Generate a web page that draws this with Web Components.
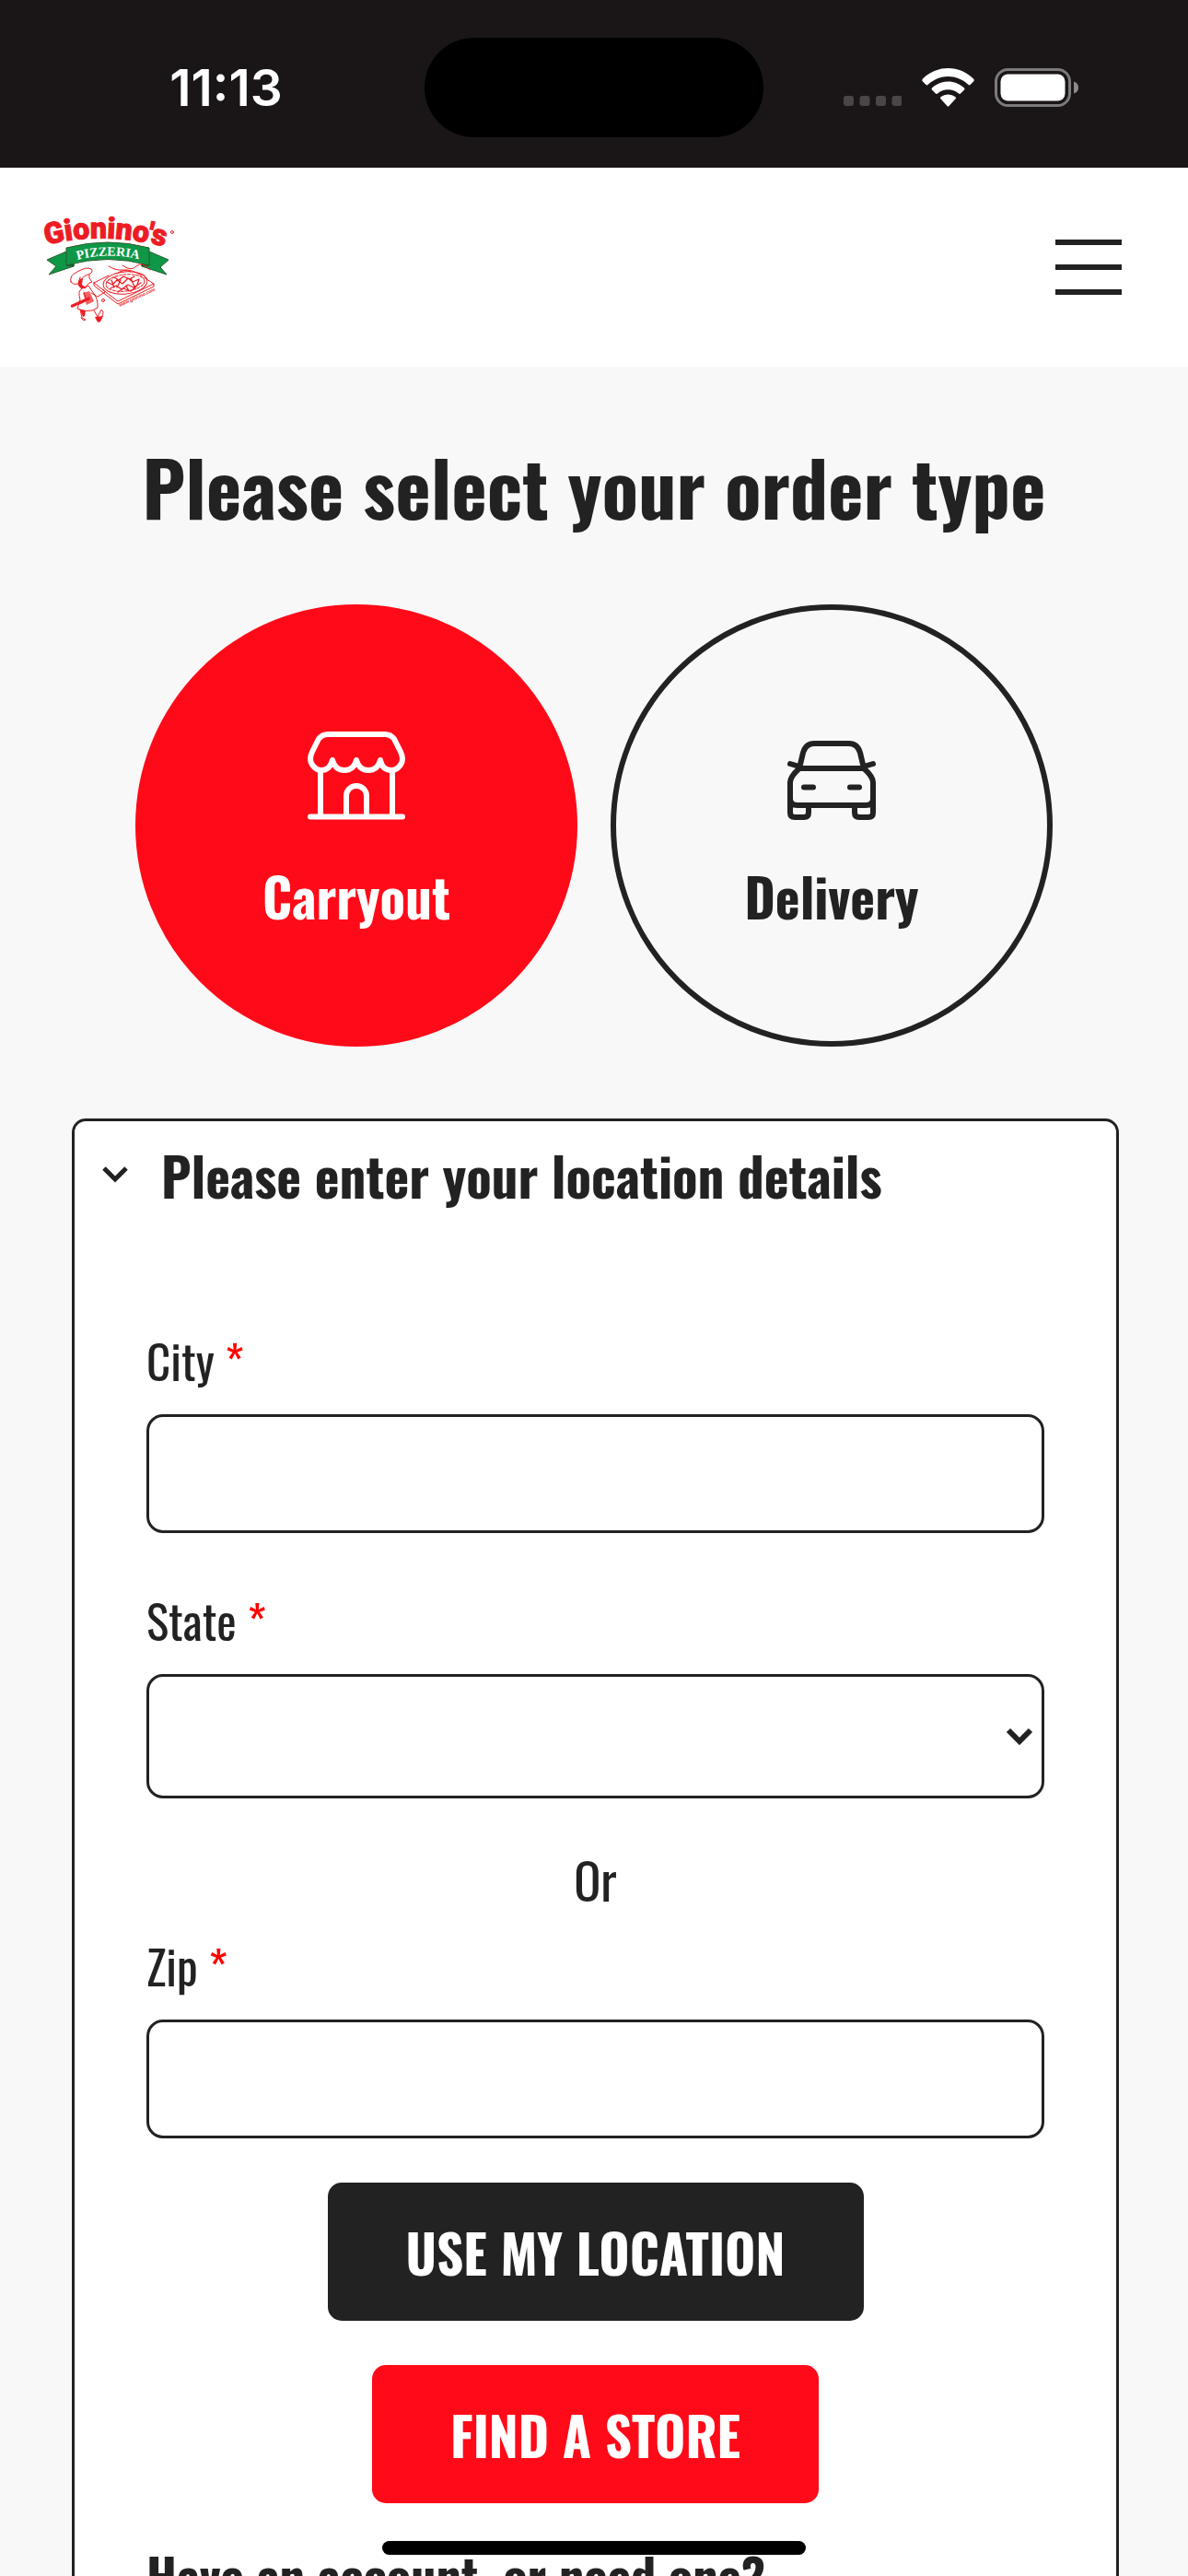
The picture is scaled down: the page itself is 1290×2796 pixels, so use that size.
<!DOCTYPE html>
<html lang="en">
<head>
<meta charset="utf-8">
<meta name="viewport" content="width=device-width, initial-scale=1">
<title>Gionino's Pizzeria</title>
<style>
    :root{
        --ink:#222222;
        --red:#ff0a18;
        --paper:#f8f8f8;
        --title-size:82px;
        --heading-size:57px;
        --text-size:54px;
        --label-size:51px;
    }
    body{
        margin:0;
        background:var(--paper);
        color:var(--ink);
        font-family:Oswald, "Liberation Sans Narrow", "Liberation Sans", sans-serif;
    }
</style>
</head>
<body>
<order-page></order-page>

<script>
// small helper so that every element gets its template the same way
const makeTemplate = (html) => {
    const template = document.createElement('template');
    template.innerHTML = html;
    return template;
}

const status_bar_template = makeTemplate(`
<style>
    :host{
        display:grid;
        grid-template-columns:1fr 368px 1fr;
        align-items:center;
        box-sizing:border-box;
        height:182px;
        padding-top:8px;
        background:#1a1617;
        color:white;
    }
    .time{
        padding-right:34px;
        padding-left:64px;
        text-align:center;
        font:600 55px/60px Inter, "Liberation Sans", sans-serif;
    }
    .island{
        height:108px;
        border-radius:54px;
        background:black;
    }
    .icons{
        display:flex;
        align-items:center;
        gap:22px;
        padding-left:87px;
    }
    svg{
        display:block;
        flex:none;
    }
</style>
    <div class="time">11:13</div>
    <div class="island"></div>
    <div class="icons">
        <svg width="63" height="42" viewBox="0 0 63 42" fill="#4a4647">
            <rect y="30" width="11" height="11" rx="3"/>
            <rect x="17.500" y="30" width="11" height="11" rx="3"/>
            <rect x="35" y="30" width="11" height="11" rx="3"/>
            <rect x="52.500" y="30" width="11" height="11" rx="3"/>
        </svg>
        <svg width="57" height="42" viewBox="0 0 57 42" fill="white">
            <path d="M28.500 0C39 0 49 4.300 56 11.500Q57.500 13 56 14.500L52.500 18Q51.500 19 50 17.500C44 12 36.500 9 28.500 9S13 12 7 17.500Q5.500 19 4.500 18L1 14.500Q-.5 13 1 11.500C8 4.300 18 0 28.500 0Z"/>
            <path d="M28.500 14.500C35 14.500 41 17 45.800 21.300Q47 22.500 45.800 23.800L42.300 27.300Q41 28.500 39.700 27.300C36.500 24.700 32.700 23.300 28.500 23.300S20.500 24.700 17.300 27.300Q16 28.500 14.700 27.300L11.200 23.800Q10 22.500 11.200 21.300C16 17 22 14.500 28.500 14.500Z"/>
            <path d="M28.500 28.500Q33 28.500 36.500 31.200Q37.700 32.200 36.600 33.300L29.500 41Q28.500 42 27.500 41L20.400 33.300Q19.300 32.200 20.500 31.200Q24 28.500 28.500 28.500Z"/>
        </svg>
        <svg width="92" height="42" viewBox="0 0 92 42">
            <rect x="1.500" y="1.500" width="80" height="39" rx="13" fill="none" stroke="#7d7a7b" stroke-width="3"/>
            <rect x="6.500" y="6.500" width="70" height="29" rx="8" fill="white"/>
            <path d="M86 14.500q5 1.500 5 6.500t-5 6.500z" fill="#8d8a8b"/>
        </svg>
    </div>
`);

class StatusBar extends HTMLElement{
    constructor(){
        super();
        this.attachShadow({mode:'open'});
        this.shadowRoot.appendChild(status_bar_template.content.cloneNode(true));
    }
}
window.customElements.define('status-bar',StatusBar);


const pizzeria_logo_template = makeTemplate(`
<style>
    :host{
        display:block;
    }
    svg{
        display:block;
        overflow:visible;
    }
</style>
    <svg width="144" height="126" viewBox="16 12 144 126" role="img" aria-label="Gionino's Pizzeria">
        <defs>
            <path id="name-arc" d="M20 51Q86 34 160 56"/>
            <path id="ribbon-arc" d="M54 67Q88 58 123 67"/>
            <path id="site-line" d="M100 118L142 99"/>
        </defs>
        <g fill="#0d9747" stroke="#2c5a2e" stroke-width="1">
            <path d="M42 58L21 67L31 74L23 83L50 74V68Z"/>
            <path d="M132 58L153 67L144 75L151 83L124 74V68Z"/>
            <path d="M42 73L50 74V69ZM132 73L124 74V69Z" fill="#0a6a33"/>
            <path d="M42 54Q87 42 132 54V73Q87 60 42 73Z"/>
        </g>
        <text fill="#ed1c24" stroke="#ed1c24" stroke-width="1" font-family="Roboto, sans-serif" font-weight="900" font-size="32"><textPath href="#name-arc">Gionino's</textPath></text>
        <text fill="white" font-family="Liberation Serif, serif" font-weight="700" font-size="14"><textPath href="#ribbon-arc">PIZZERIA</textPath></text>
        <g fill="none" stroke="#ed1c24" stroke-width="1" stroke-linejoin="round" stroke-linecap="round">
            <circle cx="157" cy="37" r="1.500"/>
            <path d="M103 73Q112 80 118 74T133 78M88 74Q96 79 104 78T124 84M97 82Q104 76 112 80"/>
            <path d="M72 92L88 84M72 92L98 112L137 93L126 86M72 92V95L98 115L137 96V93"/>
            <ellipse cx="106" cy="92" rx="24" ry="12" transform="rotate(-6 106 92)"/>
            <ellipse cx="106" cy="92" rx="21" ry="9" transform="rotate(-6 106 92)" stroke-dasharray="3 1.500"/>
            <path d="M86 91l6 3 5-5 6 4 6-6 5 4 7-3M90 98l6-3 6 4 7-5 6 3 8-5M94 86l5 3 5-4 7 3 5-3M98 102l6-4 8 3 6-5M101 89l-4 8M112 87l4 9M107 95l3 6M91 89l3 8M121 88l-2 6" stroke-width="1.300"/>
            <path d="M47 91Q45 84 54 80Q64 74 69 77Q73 81 63 84Q59 86 57 91Q52 96 47 91Z"/>
            <path d="M57 86L55 94Q58 99 62 97L67 92L70 91L67 87V83"/>
            <path d="M59 98Q54 101 57 110L54 120Q62 124 70 122L76 119Q77 109 70 101L66 95Q62 99 59 98"/>
            <path d="M69 103L76 107L84 102L82 99M61 102L64 111L57 115"/>
            <path d="M57 121L59 130L63 132Q61 134 58 130M72 122L76 129L80 121Q84 123 80 130L78 134"/>
            <circle cx="82" cy="111" r="1.500"/>
        </g>
        <g fill="#ed1c24">
            <path d="M56 88L60 87L59 94L63 97L58 98Q53 94 56 88Z"/>
            <path d="M47 116L67 107L68 110L48 119Q46 118 47 116Z"/>
            <path d="M60 103L67 101L72 112L64 116Z" opacity=".7"/>
            <path d="M57 121L63 122L62 128L60 129ZM73 129L82 128L79 134Q76 136 75 133Z"/>
            <text font-family="Liberation Sans, sans-serif" font-style="italic" font-weight="700" font-size="5"><textPath href="#site-line">www.gionino.com</textPath></text>
        </g>
    </svg>
`);

class PizzeriaLogo extends HTMLElement{
    constructor(){
        super();
        this.attachShadow({mode:'open'});
        this.shadowRoot.appendChild(pizzeria_logo_template.content.cloneNode(true));
    }
}
window.customElements.define('pizzeria-logo',PizzeriaLogo);


const site_header_template = makeTemplate(`
<style>
    :host{
        display:flex;
        align-items:center;
        justify-content:space-between;
        box-sizing:border-box;
        height:216px;
        padding:0 72px 0 46px;
        background:white;
    }
    button{
        display:grid;
        gap:21px;
        width:72px;
        padding:0;
        border:0;
        background:none;
        cursor:pointer;
    }
    span{
        height:6px;
        background:var(--ink);
    }
</style>
    <slot></slot>
    <button type="button" aria-label="Menu"><span></span><span></span><span></span></button>
`);

class SiteHeader extends HTMLElement{
    constructor(){
        super();
        this.attachShadow({mode:'open'});
        this.shadowRoot.appendChild(site_header_template.content.cloneNode(true));
    }
}
window.customElements.define('site-header',SiteHeader);


const order_type_template = makeTemplate(`
<style>
    :host{
        display:block;
    }
    button{
        display:flex;
        flex-direction:column;
        align-items:center;
        justify-content:center;
        gap:46px;
        box-sizing:border-box;
        width:480px;
        height:480px;
        padding:10px 0 0;
        border:6px solid var(--ink);
        border-radius:50%;
        background:none;
        color:var(--ink);
        font:700 var(--heading-size)/72px Oswald, "Liberation Sans Narrow", "Liberation Sans", sans-serif;
        cursor:pointer;
    }
    :host([selected]) button{
        border-color:var(--red);
        background:var(--red);
        color:white;
    }
    ::slotted(svg){
        display:block;
        fill:none;
        stroke:currentColor;
        stroke-width:6px;
        stroke-linecap:round;
        stroke-linejoin:round;
    }
</style>
    <button type="button"><slot name="icon"></slot><slot></slot></button>
`);

class OrderType extends HTMLElement{
    constructor(){
        super();
        this.attachShadow({mode:'open'});
        this.shadowRoot.appendChild(order_type_template.content.cloneNode(true));
        this.button = this.shadowRoot.querySelector('button');
    }

    connectedCallback(){
        this.button.setAttribute('aria-pressed',this.hasAttribute('selected'));
        this.button.addEventListener('click',()=>{
            this.parentElement.querySelectorAll('order-type').forEach(item => {
                item.selected = item === this;
            })
        });
    }

    set selected(value){
        this.toggleAttribute('selected',value);
        this.button.setAttribute('aria-pressed',value);
    }
}
window.customElements.define('order-type',OrderType);


const form_field_template = makeTemplate(`
<style>
    :host{
        display:grid;
        gap:29px;
    }
    label{
        font-size:var(--label-size);
        line-height:60px;
    }
    .required{
        color:#ff0000;
    }
    .control{
        display:grid;
        align-items:center;
    }
    input, select, svg{
        grid-area:1 / 1;
    }
    input, select{
        appearance:none;
        box-sizing:border-box;
        width:100%;
        height:129px;
        margin:0;
        padding:0 36px;
        border:3px solid var(--ink);
        border-radius:18px;
        background:white;
        color:var(--ink);
        font:400 var(--label-size)/60px Oswald, "Liberation Sans Narrow", "Liberation Sans", sans-serif;
    }
    select{
        height:135px;
    }
    svg{
        justify-self:end;
        margin-right:12px;
        pointer-events:none;
    }
</style>
    <label for="control"><slot></slot> <span class="required">*</span></label>
    <div class="control"></div>
`);

class FormField extends HTMLElement{
    constructor(){
        super();
        this.attachShadow({mode:'open'});
        this.shadowRoot.appendChild(form_field_template.content.cloneNode(true));
        this.holder = this.shadowRoot.querySelector('.control');
    }

    connectedCallback(){
        if(this.getAttribute('type') === 'select'){
            this.holder.innerHTML = `
                <select id="control" required><option value=""></option></select>
                <svg width="30" height="20" viewBox="0 0 30 20" fill="none" stroke="currentColor" stroke-width="6"><path d="M3 3L15 15L27 3"/></svg>
            `;
        }else{
            this.holder.innerHTML = `<input id="control" type="text" required>`;
        }
    }
}
window.customElements.define('form-field',FormField);


const action_button_template = makeTemplate(`
<style>
    :host{
        display:block;
    }
    button{
        height:150px;
        padding:0 85px;
        border:0;
        border-radius:15px;
        background:var(--ink);
        color:white;
        font:700 var(--heading-size)/72px Oswald, "Liberation Sans Narrow", "Liberation Sans", sans-serif;
        text-transform:uppercase;
        cursor:pointer;
    }
    :host([primary]) button{
        background:var(--red);
    }
</style>
    <button type="button"><slot></slot></button>
`);

class ActionButton extends HTMLElement{
    constructor(){
        super();
        this.attachShadow({mode:'open'});
        this.shadowRoot.appendChild(action_button_template.content.cloneNode(true));
    }
}
window.customElements.define('action-button',ActionButton);


const location_card_template = makeTemplate(`
<style>
    :host{
        display:block;
        border:3px solid var(--ink);
        border-radius:15px;
        background:white;
    }
    summary{
        display:flex;
        align-items:center;
        gap:36px;
        padding:22px 30px;
        list-style:none;
        cursor:pointer;
    }
    h2{
        margin:0;
        font-size:var(--heading-size);
        line-height:72px;
    }
    .body{
        padding:113px 78px 78px;
    }
</style>
    <details open>
        <summary>
            <svg width="28" height="18" viewBox="0 0 28 18" fill="none" stroke="currentColor" stroke-width="5"><path d="M2 2L14 14L26 2"/></svg>
            <h2><slot name="heading"></slot></h2>
        </summary>
        <div class="body"><slot></slot></div>
    </details>
`);

class LocationCard extends HTMLElement{
    constructor(){
        super();
        this.attachShadow({mode:'open'});
        this.shadowRoot.appendChild(location_card_template.content.cloneNode(true));
    }
}
window.customElements.define('location-card',LocationCard);


const home_indicator_template = makeTemplate(`
<style>
    :host{
        position:fixed;
        right:0;
        bottom:23px;
        left:0;
        display:flex;
        justify-content:center;
        pointer-events:none;
    }
    div{
        width:460px;
        height:15px;
        border-radius:8px;
        background:black;
    }
</style>
    <div></div>
`);

class HomeIndicator extends HTMLElement{
    constructor(){
        super();
        this.attachShadow({mode:'open'});
        this.shadowRoot.appendChild(home_indicator_template.content.cloneNode(true));
    }
}
window.customElements.define('home-indicator',HomeIndicator);


const order_page_template = makeTemplate(`
<style>
    :host{
        display:block;
        height:100vh;
        overflow:hidden;
    }
    main{
        padding:81px 75px 78px;
    }
    h1{
        margin:0 0 81px;
        font-size:var(--title-size);
        line-height:96px;
        text-align:center;
    }
    .types{
        display:flex;
        flex-wrap:wrap;
        justify-content:center;
        gap:36px;
        margin-bottom:78px;
    }
    location-card{
        margin-left:3px;
    }
    form-field + form-field{
        margin-top:64px;
    }
    .or{
        margin:58px 0 33px;
        font-size:var(--text-size);
        line-height:60px;
        text-align:center;
    }
    .actions{
        display:grid;
        justify-items:center;
        gap:48px;
        margin:48px 0 42px;
    }
    h3{
        margin:0;
        font-size:var(--text-size);
        line-height:72px;
    }
</style>
    <status-bar></status-bar>
    <site-header><pizzeria-logo></pizzeria-logo></site-header>
    <main>
        <h1>Please select your order type</h1>
        <div class="types">
            <order-type selected>
                <svg slot="icon" width="108" height="96" viewBox="23 24 108 96">
                    <path d="M46 27H108Q114 27 118 32L125 46Q129 54 125 60Q121 66 115 66Q105 66 103 55Q100 66 90 66Q80 66 77 55Q74 66 64 66Q54 66 51 55Q48 66 39 66Q33 66 29 60Q25 54 29 46L36 32Q40 27 46 27Z"/>
                    <path d="M38 66V116M116 66V116M27 116.500H127M66 116V94a11 11 0 0 1 22 0V116"/>
                </svg>
                Carryout
            </order-type>
            <order-type>
                <svg slot="icon" width="108" height="96" viewBox="19 14 108 96">
                    <path d="M38 54L42 37Q45 27 54 27H92Q101 27 104 37L108 54ZM28 49L38 52M118 49L108 52"/>
                    <path d="M38 54Q28 63 28 69V87Q28 94 36 94H110Q118 94 118 87V69Q118 63 108 54"/>
                    <path d="M28 88V102Q28 107 33 107H43Q48 107 48 102V94M118 88V102Q118 107 113 107H103Q98 107 98 102V94M43 74.500H53M93 74.500H103"/>
                </svg>
                Delivery
            </order-type>
        </div>
        <location-card>
            <span slot="heading">Please enter your location details</span>
            <form-field>City</form-field>
            <form-field type="select">State</form-field>
            <div class="or">Or</div>
            <form-field>Zip</form-field>
            <div class="actions">
                <action-button>Use my location</action-button>
                <action-button primary>Find a store</action-button>
            </div>
            <h3>Have an account, or need one?</h3>
        </location-card>
    </main>
    <home-indicator></home-indicator>
`);

class OrderPage extends HTMLElement{
    constructor(){
        super();
        this.attachShadow({mode:'open'});
        this.shadowRoot.appendChild(order_page_template.content.cloneNode(true));
    }
}
window.customElements.define('order-page',OrderPage);
</script>
</body>
</html>
